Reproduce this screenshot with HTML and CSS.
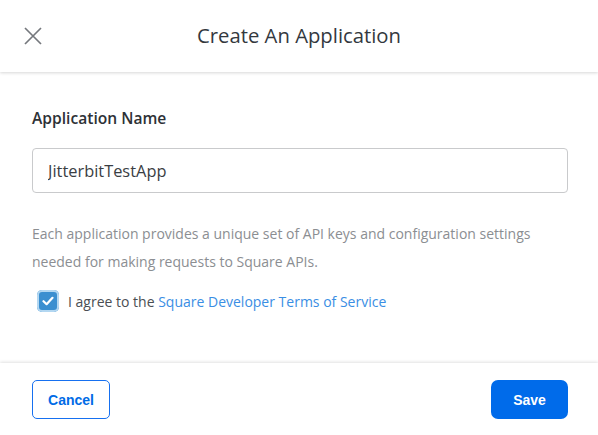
FILE: index.html
```html
<!DOCTYPE html>
<html lang="en">
<head>
<meta charset="utf-8">
<title>Create An Application</title>
<link rel="stylesheet" href="styles.css">
</head>
<body>
<div class="modal">
  <header class="modal-header">
    <button class="close" aria-label="Close">
      <svg width="18" height="18" viewBox="0 0 18 18"><path d="M1 1L17 17M17 1L1 17" stroke="#75787d" stroke-width="1.7" fill="none"/></svg>
    </button>
    <h1 class="title">Create An Application</h1>
    <span class="spacer"></span>
  </header>
  <main class="modal-body">
    <label class="field-label" for="appname">Application Name</label>
    <input class="text-input" id="appname" type="text" value="JitterbitTestApp">
    <p class="description">Each application provides a unique set of API keys and configuration settings needed for making requests to Square APIs.</p>
    <div class="agree">
      <span class="checkbox">
        <svg width="12" height="10" viewBox="0 0 12 10"><path d="M1.5 5.2L4.6 8.2L10.5 1.8" stroke="#fff" stroke-width="2.2" fill="none" stroke-linecap="round" stroke-linejoin="round"/></svg>
      </span>
      <span class="agree-text">I agree to the <a class="link" href="#">Square Developer Terms of Service</a></span>
    </div>
  </main>
  <footer class="modal-footer">
    <button class="btn btn-secondary">Cancel</button>
    <button class="btn btn-primary">Save</button>
  </footer>
</div>
</body>
</html>
```
FILE: styles.css
```css
* { box-sizing: border-box; }
html, body { margin: 0; padding: 0; background: #fff; }
body { font-family: "Open Sans", "Liberation Sans", sans-serif; color: #3e4348; }

.modal {
  width: 598px;
  height: 435px;
  display: flex;
  flex-direction: column;
  background: #fff;
}

.modal-header {
  height: 72px;
  flex: none;
  display: grid;
  grid-template-columns: 1fr auto 1fr;
  align-items: center;
  padding: 0 24px;
  box-shadow: 0 1px 3px rgba(0,0,0,0.16);
  position: relative;
  z-index: 1;
}
.close {
  justify-self: start;
  border: 0;
  background: none;
  padding: 0;
  width: 18px;
  height: 18px;
  display: flex;
  margin-top: -1px;
}
.title {
  margin: 0 0 3px;
  font-size: 20.3px;
  font-weight: 500;
  color: #33383e;
}

.modal-body {
  flex: 1;
  padding: 36px 30px 0 32px;
  display: flex;
  flex-direction: column;
}
.field-label {
  font-size: 15.6px;
  line-height: 20px;
  font-weight: 600;
  color: #2d3136;
}
.text-input {
  margin-top: 20px;
  height: 45px;
  width: 536px;
  border: 1px solid #c9cacc;
  border-radius: 4px;
  padding: 0 15px;
  font-family: inherit;
  font-size: 16.4px;
  color: #3a3e43;
  outline: none;
}
.description {
  margin: 27px 0 0;
  font-size: 14px;
  line-height: 28px;
  color: #8b8e92;
}
.agree {
  margin-top: 14px;
  margin-left: 5px;
  display: flex;
  align-items: center;
  gap: 9px;
  height: 22px;
}
.checkbox {
  width: 22px;
  height: 22px;
  border-radius: 5px;
  background: #3b8fd0;
  box-shadow: inset 0 0 0 2px #b3d7f1;
  display: flex;
  align-items: center;
  justify-content: center;
}
.agree-text {
  font-size: 14px;
  color: #4a4e53;
}
.link {
  color: #3a8ee4;
  text-decoration: none;
}

.modal-footer {
  height: 72px;
  flex: none;
  display: flex;
  justify-content: space-between;
  align-items: flex-start;
  padding: 17px 30px 0 32px;
  box-shadow: 0 -1px 3px rgba(0,0,0,0.12);
}
.btn {
  height: 39px;
  font-family: "Liberation Sans", Arial, sans-serif;
  font-weight: 700;
  font-size: 14px;
  border-radius: 5px;
  cursor: pointer;
}
.btn-secondary {
  width: 78px;
  background: #fff;
  color: #006be6;
  border: 1px solid #1670f0;
}
.btn-primary {
  width: 77px;
  background: #006bea;
  color: #fff;
  border: 0;
  border-radius: 7px;
}
```
